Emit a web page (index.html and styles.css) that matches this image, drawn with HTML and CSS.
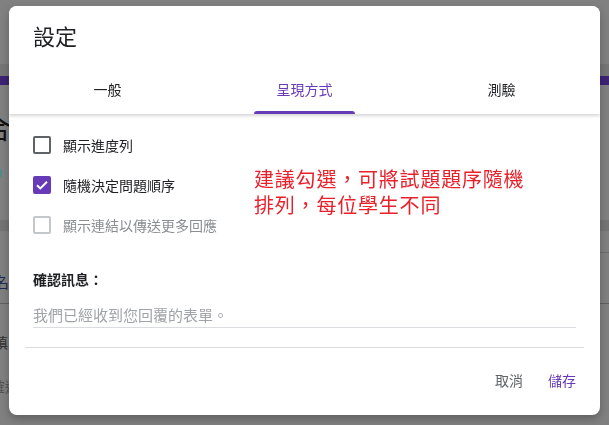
FILE: index.html
```html
<!DOCTYPE html>
<html lang="zh-Hant-TW">
<head>
<meta charset="utf-8">
<title>設定</title>
<link rel="stylesheet" href="styles.css">
</head>
<body>
<div class="page" aria-hidden="true">
  <div class="pg-appbar"></div>
  <div class="pg-tabs"></div>
  <div class="pg-accent"></div>
  <div class="pg-card1">
    <span class="pg-big">合</span>
    <span class="pg-teal"></span>
  </div>
  <div class="pg-band"></div>
  <div class="pg-card2">
    <div class="pg-rline"><div class="pg-rline-seg"></div></div>
    <div class="pg-name">名</div>
    <div class="pg-line"></div>
    <div class="pg-fill">填</div>
    <div class="pg-pick">確選</div>
  </div>
</div>

<div class="dialog" role="dialog">
  <div class="dlg-head">
    <h1 class="dlg-title">設定</h1>
    <div class="tabs">
      <div class="tab"><span class="tab-label">一般</span><span class="tab-ind"></span></div>
      <div class="tab active"><span class="tab-label">呈現方式</span><span class="tab-ind"></span></div>
      <div class="tab"><span class="tab-label">測驗</span><span class="tab-ind"></span></div>
    </div>
  </div>

  <div class="content">
    <div class="opt">
      <span class="box"></span>
      <span>顯示進度列</span>
    </div>
    <div class="opt">
      <span class="box checked">
        <svg width="14" height="14" viewBox="0 0 14 14"><path d="M2 7.2 L5.3 10.4 L12 3.7" fill="none" stroke="#fff" stroke-width="2"/></svg>
      </span>
      <span>隨機決定問題順序</span>
    </div>
    <div class="opt disabled">
      <span class="box"></span>
      <span>顯示連結以傳送更多回應</span>
    </div>

    <div class="confirm-label">確認訊息：</div>
    <div class="confirm-input">我們已經收到您回覆的表單。</div>
  </div>

  <div class="divider"></div>

  <div class="footer">
    <span class="btn btn-cancel">取消</span>
    <span class="btn btn-save">儲存</span>
  </div>

  <div class="note">
    <div>建議勾選，可將試題題序隨機</div>
    <div>排列，每位學生不同</div>
  </div>
</div>
</body>
</html>
```

FILE: styles.css
```css
html, body {
  margin: 0;
  padding: 0;
}

body {
  width: 609px;
  height: 425px;
  overflow: hidden;
  background: #808080;
  font-family: "Noto Sans CJK TC", "Noto Sans TC", "Noto Sans", sans-serif;
  color: #202124;
}

/* dimmed page underneath */
.pg-appbar { height: 64px; }
.pg-tabs { height: 12px; background: #767676; }
.pg-accent { height: 9px; background: #3c2373; }

.pg-card1 {
  height: 135px;
  box-sizing: border-box;
  padding-top: 30px;
}
.pg-big {
  display: block;
  font-size: 28px;
  line-height: 24px;
  margin-left: -17px;
  color: #111;
}
.pg-teal {
  display: block;
  width: 2px;
  height: 8px;
  margin-top: 30px;
  background: #4f8c8a;
}
.pg-band { height: 11px; background: #747474; }

.pg-rline { display: flex; justify-content: flex-end; }
.pg-rline-seg {
  width: 12px;
  height: 21px;
  border-bottom: 1px solid #6c6c6c;
}
.pg-name {
  margin-top: 22px;
  margin-left: -6px;
  font-size: 15px;
  line-height: 14px;
  color: #1c2b4d;
}
.pg-line {
  margin-top: 14px;
  border-top: 1px solid #5f5f5f;
}
.pg-fill {
  margin-top: 32px;
  margin-left: -6px;
  font-size: 14px;
  line-height: 13px;
  color: #333;
}
.pg-pick {
  margin-top: 30px;
  margin-left: -9px;
  font-size: 14px;
  line-height: 14px;
  color: #555;
}

/* dialog */
.dialog {
  position: fixed;
  left: 9px;
  top: 6px;
  width: 591px;
  height: 409px;
  background: #fff;
  border-radius: 8px;
  overflow: hidden;
  box-shadow: 0 4px 8px rgba(0, 0, 0, 0.25);
}

.dlg-head {
  position: relative;
  z-index: 1;
  background: #fff;
  box-shadow: 0 2px 3px rgba(0, 0, 0, 0.16);
}

.dlg-title {
  margin: 0;
  padding: 15px 24px 0;
  font-size: 22px;
  line-height: 28px;
  font-weight: 400;
  color: #202124;
}

.tabs {
  display: flex;
  margin-top: 17px;
  height: 48px;
}

.tab {
  flex: 1;
  display: flex;
  flex-direction: column;
  align-items: center;
  font-size: 14px;
  color: #202124;
}

.tab-label {
  flex: 1;
  display: flex;
  align-items: center;
  line-height: 20px;
}

.tab-ind {
  width: 101px;
  height: 3px;
  border-radius: 3px 3px 0 0;
}

.tab.active { color: #673ab7; }
.tab.active .tab-ind { background: #673ab7; }

.content {
  padding: 11px 24px 0;
}

.opt {
  display: flex;
  align-items: center;
  gap: 12px;
  height: 40px;
  font-size: 14px;
  line-height: 20px;
  color: #202124;
}

.box {
  width: 18px;
  height: 18px;
  box-sizing: border-box;
  border: 2px solid #5f6368;
  border-radius: 2px;
  display: flex;
  align-items: center;
  justify-content: center;
  flex: none;
}

.box.checked {
  background: #673ab7;
  border-color: #673ab7;
}

.opt.disabled { color: #8a8d91; }
.opt.disabled .box { border-color: #c4c7ca; }

.confirm-label {
  margin-top: 24px;
  font-size: 14px;
  line-height: 20px;
  font-weight: 700;
  color: #202124;
}

.confirm-input {
  margin-top: 16px;
  font-size: 15px;
  line-height: 20px;
  padding-bottom: 2px;
  border-bottom: 1px solid #dadce0;
  color: #a0a3a7;
}

.divider {
  margin: 19px 16px 0;
  border-top: 1px solid #dadce0;
}

.footer {
  display: flex;
  justify-content: flex-end;
  gap: 25px;
  padding: 22px 24px 0;
  font-size: 14px;
  line-height: 20px;
}

.btn-cancel { color: #5f6368; }
.btn-save { color: #673ab7; }

.note {
  position: absolute;
  left: 245px;
  top: 160px;
  font-size: 20px;
  line-height: 26px;
  letter-spacing: 0.8px;
  color: #e8212b;
}
```
